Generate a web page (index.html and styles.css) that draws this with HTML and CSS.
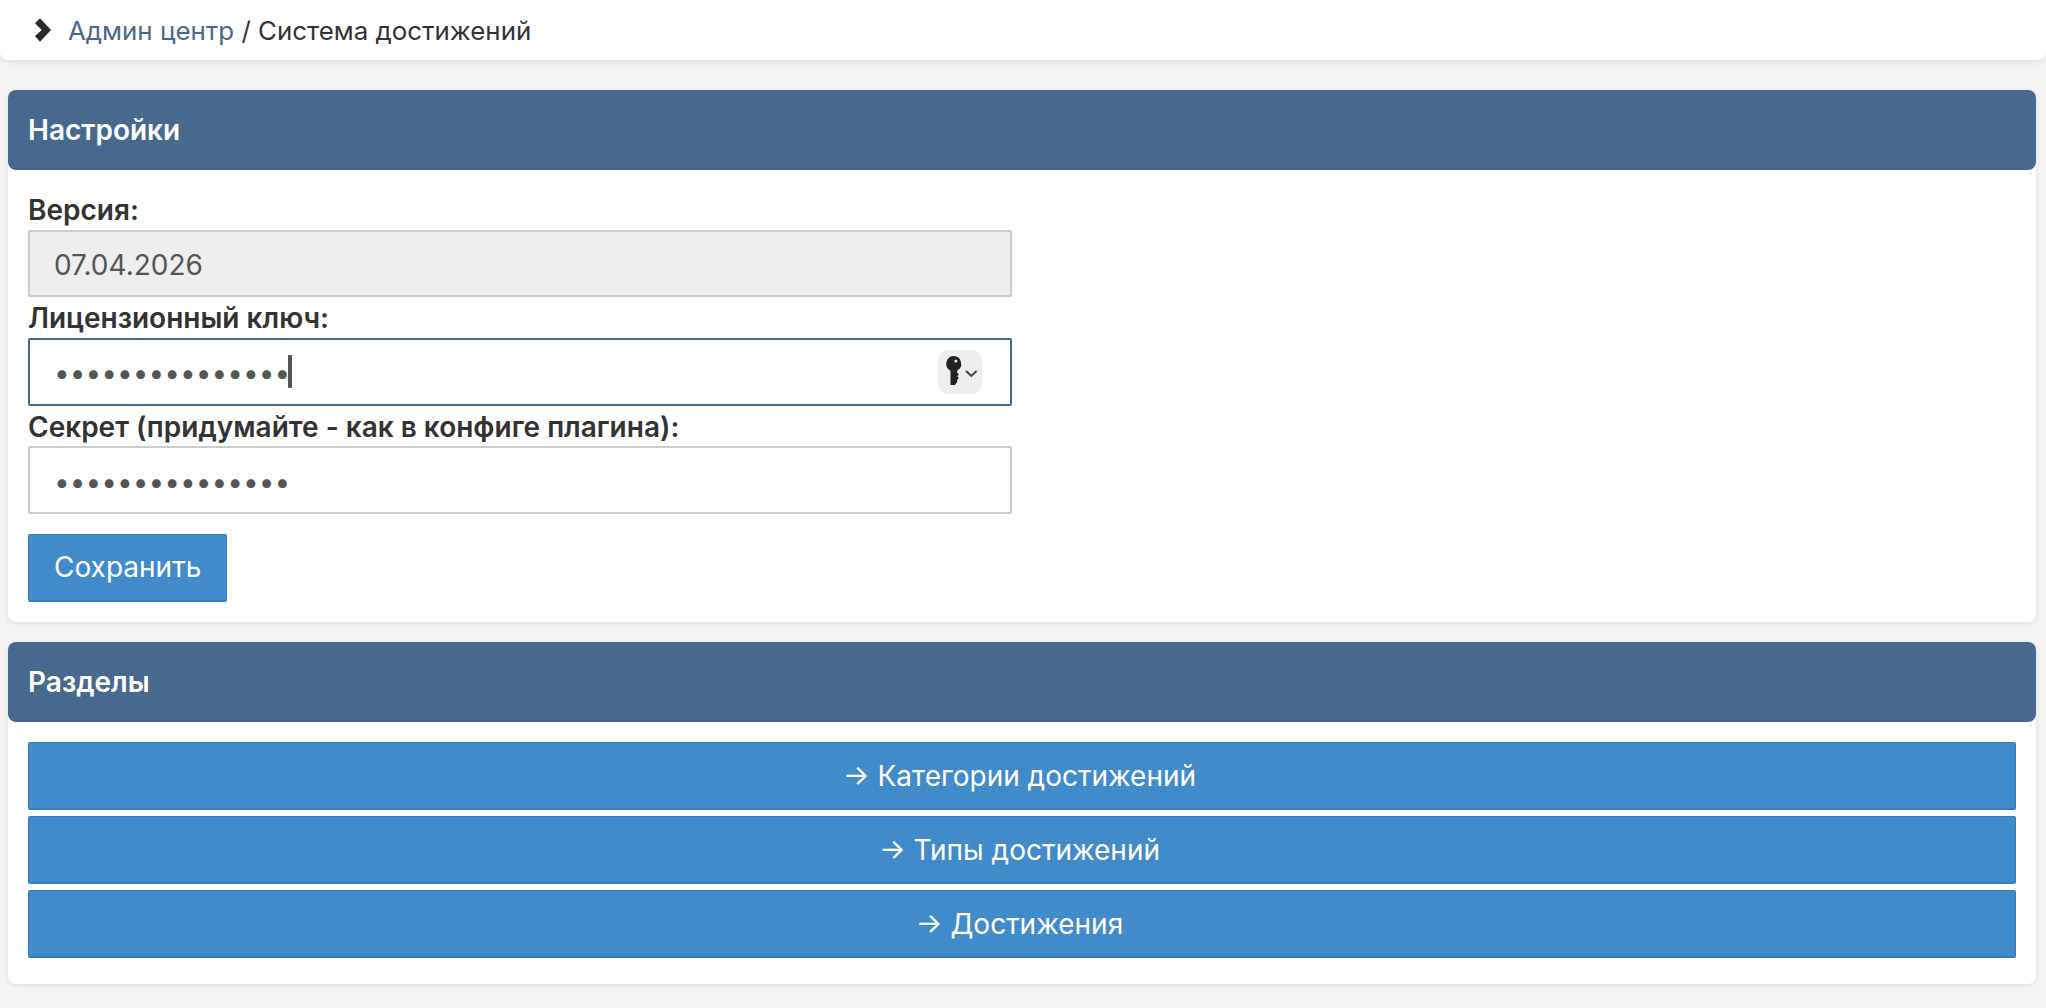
FILE: index.html
```html
<!DOCTYPE html>
<html lang="ru">
<head>
<meta charset="utf-8">
<title>Система достижений</title>
<link rel="stylesheet" href="styles.css">
</head>
<body>
<nav class="crumbs">
  <svg class="chev" viewBox="0 0 16 24" width="16" height="24"><path d="M0 5.3 5 .3 16 12 5 23.700 0 18 6.700 12Z" fill="#2b2b2b"/></svg>
  <span><a href="#" class="crumb-link">Админ центр</a> / Система достижений</span>
</nav>
<main class="content">
  <section class="panel">
    <h2 class="panel-head">Настройки</h2>
    <form class="panel-body">
      <label class="field-label">Версия:</label>
      <input class="field field-disabled" type="text" value="07.04.2026" disabled>
      <label class="field-label">Лицензионный ключ:</label>
      <div class="field-wrap">
        <input class="field field-focus" type="password" value="123456789012345">
        <span class="caret"></span>
        <span class="key-btn">
          <svg viewBox="0 0 44 44" width="44" height="44">
            <path d="M15.500 6a7.800 7.800 0 0 1 3.700 14.600v2.200l1.800 1.700-1.800 1.700 1.800 1.700-1.800 1.800v2.400L17 35h-4.500V20.700A7.800 7.800 0 0 1 15.500 6Zm2.400 3.500a1.500 1.500 0 1 0 0 3 1.500 1.500 0 0 0 0-3Z" fill="#222" fill-rule="evenodd"/>
            <path d="M28 21l5.300 5 5.300-5" fill="none" stroke="#444" stroke-width="2"/>
          </svg>
        </span>
      </div>
      <label class="field-label">Секрет (придумайте - как в конфиге плагина):</label>
      <input class="field" type="password" value="123456789012345">
      <div class="save-row"><button type="button" class="btn">Сохранить</button></div>
    </form>
  </section>
  <section class="panel">
    <h2 class="panel-head">Разделы</h2>
    <div class="panel-body links">
      <a href="#" class="btn btn-block">→ Категории достижений</a>
      <a href="#" class="btn btn-block">→ Типы достижений</a>
      <a href="#" class="btn btn-block">→ Достижения</a>
    </div>
  </section>
</main>
</body>
</html>
```
FILE: styles.css
```css
* { box-sizing: border-box; }
html, body { height: 100%; }
body {
  margin: 0;
  background: #f4f4f4;
  font-family: Inter, "Liberation Sans", sans-serif;
  font-size: 28px;
  color: #333;
}
.crumbs {
  height: 60px;
  background: #fff;
  border-radius: 0 0 8px 8px;
  box-shadow: 0 1px 6px rgba(0,0,0,.12);
  display: flex;
  align-items: center;
  gap: 17px;
  padding: 0 0 0 35px;
  font-size: 25.9px;
}
.crumb-link { color: #46698d; text-decoration: none; }
.content {
  padding: 30px 10px 0 8px;
  display: flex;
  flex-direction: column;
  gap: 20px;
}
.panel {
  background: #fff;
  border-radius: 8px;
  box-shadow: 0 1px 5px rgba(0,0,0,.1);
}
.panel-head {
  margin: 0;
  height: 80px;
  line-height: 80px;
  padding: 0 20px;
  background: #46698d;
  color: #fff;
  font-size: 28px;
  font-weight: 600;
  border-radius: 8px;
}
.panel-body { padding: 19.3px 20px 20px; }
.field-label {
  display: block;
  line-height: 42px;
  height: 40.7px;
  font-weight: 600;
}
.field {
  display: block;
  width: 984px;
  height: 67.5px;
  padding: 3px 24px 0;
  border: 2px solid #ccc;
  border-radius: 2px;
  background: #fff;
  color: #555;
  font: 28px Inter, "Liberation Sans", sans-serif;
  outline: none;
}
.field-disabled { background: #eee; color: #555; }
.field-focus { border-color: #46698d; }
.field-wrap { position: relative; width: 984px; }
.caret {
  position: absolute;
  left: 260px;
  top: 17px;
  width: 4px;
  height: 33px;
  border-radius: 1px;
  background: #555;
}
.key-btn {
  position: absolute;
  right: 30px;
  top: 12px;
  width: 44px;
  height: 44px;
  border-radius: 10px;
  background: #eee;
  display: flex;
}
.save-row { margin-top: 20px; }
.btn {
  display: inline-block;
  height: 68px;
  padding: 0 25px;
  background: #428bca;
  border: 2px solid #357ebd;
  border-width: 1px 1px 2px;
  border-radius: 2px;
  color: #fff;
  font: 28px/64px Inter, "Liberation Sans", sans-serif;
  text-decoration: none;
}
.links {
  display: flex;
  flex-direction: column;
  gap: 6px;
  padding-top: 20px;
  padding-bottom: 26px;
}
.btn-block {
  display: block;
  text-align: center;
  width: 100%;
  line-height: 66px;
  padding: 0 5px 0 0;
}
```
